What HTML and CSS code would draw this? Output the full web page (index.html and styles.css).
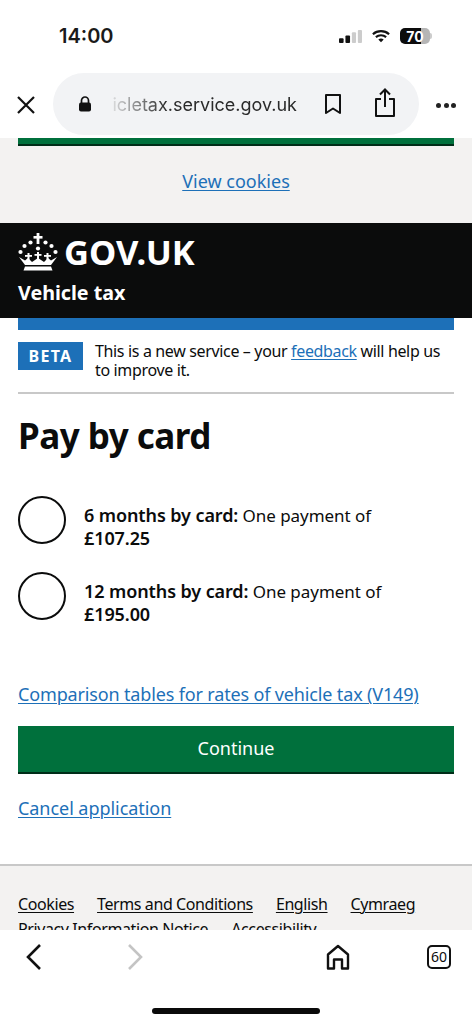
FILE: index.html
```html
<!DOCTYPE html>
<html>
<head>
  <title>Pay by card - Vehicle tax</title>
  <link rel="stylesheet" href="styles.css">
</head>
<body>
  <div class="phone">
    <div class="statusBar">
      <span class="time">14:00</span>
      <div class="statusIcons">
        <svg width="23" height="15" viewBox="0 0 25 16">
          <rect x="0" y="10" width="5" height="5" rx="1" fill="#111"/>
          <rect x="7" y="7" width="5" height="8" rx="1" fill="#111"/>
          <rect x="14" y="3.500" width="4.500" height="11.500" rx="1" fill="#ccc"/>
          <rect x="20.500" y="1" width="4.500" height="14" rx="1" fill="#ccc"/>
        </svg>
        <svg class="wifi" width="18" height="14" viewBox="0 0 20 15">
          <path d="M1 5.500C6 1 14 1 19 5.500M4.300 8.700C7.500 6 12.500 6 15.700 8.700" fill="none" stroke="#111" stroke-width="2.400"/>
          <path d="M7 11.300C8.800 10 11.200 10 13 11.300L10 14.500Z" fill="#111"/>
        </svg>
        <div class="battery"><span class="batteryLevel">70</span></div>
        <span class="batteryTip"></span>
      </div>
    </div>

    <div class="urlRow">
      <svg class="closeIcon" width="20" height="20" viewBox="0 0 20 20">
        <path d="M2 2L18 18M18 2L2 18" stroke="#111" stroke-width="2.200" fill="none"/>
      </svg>
      <div class="urlBar">
        <svg width="14" height="16" viewBox="0 0 14 16">
          <path d="M3.500 7V4.500a3.500 3.500 0 0 1 7 0V7" fill="none" stroke="#111" stroke-width="1.700"/>
          <rect x="1" y="6.500" width="12" height="9" rx="2" fill="#111"/>
        </svg>
        <span class="urlText">icletax.service.gov.uk</span>
        <svg class="bookmark" width="18" height="22" viewBox="0 0 18 22">
          <path d="M2 2H16V20L9 15.500L2 20Z" fill="none" stroke="#111" stroke-width="2" stroke-linejoin="round"/>
        </svg>
        <svg class="share" width="22" height="30" viewBox="0 0 22 30">
          <path d="M7 11H2V28H20V11H15" fill="none" stroke="#111" stroke-width="2" stroke-linejoin="round"/>
          <path d="M11 19V2M6 6.500L11 1.500L16 6.500" fill="none" stroke="#111" stroke-width="2"/>
        </svg>
      </div>
      <div class="moreDots"><i></i><i></i><i></i></div>
    </div>

    <div class="page">
      <div class="cookieArea">
        <div class="greenBar"></div>
        <a class="link viewCookies" href="#">View cookies</a>
      </div>

      <div class="header">
        <div class="logo">
          <svg width="40" height="38" viewBox="0 0 40 38">
            <g fill="#fff">
              <rect x="18.600" y="0" width="2.800" height="11"/>
              <rect x="15.500" y="3" width="9" height="2.600"/>
              <circle cx="12.500" cy="9.500" r="2.100"/>
              <circle cx="27.500" cy="9.500" r="2.100"/>
              <circle cx="6.500" cy="13" r="2.100"/>
              <circle cx="33.500" cy="13" r="2.100"/>
              <circle cx="2.500" cy="19" r="2.100"/>
              <circle cx="37.500" cy="19" r="2.100"/>
              <circle cx="20" cy="15.500" r="2.100"/>
              <rect x="19" y="19" width="2" height="9"/>
              <rect x="16.500" y="21" width="7" height="1.800"/>
              <rect x="9.500" y="20" width="2" height="8"/>
              <rect x="7" y="22" width="7" height="1.800"/>
              <rect x="28.500" y="20" width="2" height="8"/>
              <rect x="26" y="22" width="7" height="1.800"/>
              <path d="M1 24L7 32H33L39 24L33 27.500L30 25L26 29L20 25L14 29L10 25L7 27.500Z"/>
              <path d="M7 33.500H33L34.500 37.500H5.500Z"/>
            </g>
          </svg>
          <span class="logoText">GOV.UK</span>
        </div>
        <div class="serviceName">Vehicle tax</div>
      </div>

      <div class="main">
        <div class="blueBar"></div>
        <div class="phaseBanner">
          <strong class="phaseTag">BETA</strong>
          <span class="phaseText">This is a new service – your <a class="link" href="#">feedback</a> will help us to improve it.</span>
        </div>

        <h1>Pay by card</h1>

        <div class="radioItem">
          <span class="radio"></span>
          <span class="radioLabel"><b>6 months by card:</b> One payment of<br><b>£107.25</b></span>
        </div>
        <div class="radioItem">
          <span class="radio"></span>
          <span class="radioLabel"><b>12 months by card:</b> One payment of<br><b>£195.00</b></span>
        </div>

        <a class="link comparison" href="#">Comparison tables for rates of vehicle tax (V149)</a>
        <button class="continueBtn">Continue</button>
        <a class="link cancel" href="#">Cancel application</a>
      </div>

      <div class="footer">
        <a href="#">Cookies</a>
        <a href="#">Terms and Conditions</a>
        <a href="#">English</a>
        <a href="#">Cymraeg</a>
        <a href="#">Privacy Information Notice</a>
        <a href="#">Accessibility</a>
      </div>
    </div>

    <div class="bottomBar">
      <div class="navIcons">
        <svg width="18" height="28" viewBox="0 0 18 28">
          <path d="M15 2L3 14L15 26" fill="none" stroke="#111" stroke-width="2.600"/>
        </svg>
        <svg class="forward" width="18" height="28" viewBox="0 0 18 28">
          <path d="M3 2L15 14L3 26" fill="none" stroke="#c4c4c4" stroke-width="2.600"/>
        </svg>
        <svg class="home" width="24" height="26" viewBox="0 0 24 26">
          <path d="M2 24.500V10.500L12 2L22 10.500V24.500H16V15.500H8V24.500Z" fill="none" stroke="#111" stroke-width="2.400" stroke-linejoin="round"/>
        </svg>
        <div class="tabCount">60</div>
      </div>
      <div class="homeIndicator"></div>
    </div>
  </div>
</body>
</html>
```

FILE: styles.css
```css
* { box-sizing: border-box; }
body { margin: 0; background: #fff; font-family: "Noto Sans", Arial, sans-serif; color: #0b0c0c; }
.phone { width: 472px; height: 1024px; display: flex; flex-direction: column; overflow: hidden; }

.statusBar { height: 73px; flex: none; display: flex; justify-content: space-between; padding: 21px 40px 0 59px; }
.time { font-family: Inter, sans-serif; font-size: 20px; font-weight: 600; line-height: 30px; color: #1a1a1a; }
.statusIcons { display: flex; align-items: center; height: 30px; }
.wifi { margin-left: 10px; }
.battery { width: 30px; height: 16px; margin-left: 10px; border-radius: 5px; background: linear-gradient(to right, #0c0c0c 70%, #b5b5b5 70%); display: flex; align-items: center; justify-content: center; }
.batteryLevel { font-family: Inter, sans-serif; font-size: 14px; font-weight: 700; color: #fff; }
.batteryTip { width: 2px; height: 6px; background: #ccc; border-radius: 0 2px 2px 0; }

.urlRow { height: 65px; flex: none; display: flex; align-items: flex-start; padding-left: 16px; }
.closeIcon { margin-top: 22px; flex: none; }
.urlBar { width: 366px; height: 62px; margin-left: 17px; padding-left: 25px; background: #f2f3f5; border-radius: 31px; display: flex; align-items: center; flex: none; }
.urlText { width: 186px; margin-left: 19px; font-family: Inter, sans-serif; font-size: 18px; color: #2a2a2a; white-space: nowrap; overflow: hidden; text-align: right; -webkit-mask-image: linear-gradient(to right, rgba(0,0,0,.1), #000 30%); mask-image: linear-gradient(to right, rgba(0,0,0,.1), #000 30%); }
.bookmark { margin-left: 27px; }
.share { margin-left: 32px; margin-top: -3px; }
.moreDots { display: flex; gap: 2.500px; margin: 30px 0 0 17px; }
.moreDots i { width: 5px; height: 5px; border-radius: 50%; background: #222; }

.page { height: 792px; flex: none; overflow: hidden; }
.cookieArea { height: 85px; background: #f3f2f1; padding: 0 18px; text-align: center; }
.greenBar { height: 8px; background: #00703c; border-bottom: 2px solid #002d18; }
.link { color: #1d70b8; text-decoration: underline; text-decoration-thickness: 1px; text-underline-offset: 2px; }
.viewCookies { display: block; margin-top: 21px; font-size: 18px; line-height: 28px; }

.header { height: 95px; background: #0b0c0c; color: #fff; padding: 9px 18px 0; }
.logo { display: flex; align-items: center; height: 40px; }
.logoText { margin-left: 6px; font-size: 34.500px; font-weight: 700; line-height: 38px; }
.serviceName { margin-top: 7px; font-size: 19.700px; font-weight: 700; line-height: 28px; }

.main { height: 548px; background: #fff; padding: 0 18px; border-bottom: 2px solid #c8c8c8; }
.blueBar { height: 12px; background: #1d70b8; }
.phaseBanner { display: flex; height: 64px; padding-top: 12px; border-bottom: 2px solid #c8c8c8; }
.phaseTag { width: 65px; height: 28px; flex: none; background: #1d70b8; color: #fff; font-size: 16px; letter-spacing: 1.300px; line-height: 28px; text-align: center; }
.phaseText { margin-left: 12px; font-size: 16px; line-height: 19px; letter-spacing: -0.350px; }

h1 { margin: 20px 0 38px; font-size: 35px; font-weight: 700; line-height: 44px; letter-spacing: -0.500px; }
.radioItem { display: flex; height: 76px; }
.radio { width: 48px; height: 48px; flex: none; border: 2.500px solid #0b0c0c; border-radius: 50%; background: #fff; }
.radioLabel { margin-left: 18px; padding-top: 7.500px; font-size: 17px; line-height: 23px; letter-spacing: -0.050px; }
.radioLabel b { font-size: 18px; font-weight: 600; letter-spacing: -0.100px; }
.comparison { display: block; margin-top: 33px; font-size: 18px; line-height: 26px; letter-spacing: -0.150px; }
.continueBtn { display: block; width: 100%; height: 48px; margin-top: 19px; padding: 0 0 2px; background: #00703c; color: #fff; border: none; border-bottom: 2px solid #002d18; font-family: inherit; font-size: 18px; }
.cancel { display: block; margin-top: 21px; font-size: 18px; line-height: 26px; letter-spacing: -0.050px; }

.footer { background: #f3f2f1; padding: 26px 18px 0; display: flex; flex-wrap: wrap; column-gap: 23px; row-gap: 1px; height: 64px; }
.footer a { color: #0b0c0c; font-size: 16px; line-height: 24px; letter-spacing: -0.400px; text-decoration: underline; text-decoration-thickness: 1px; text-underline-offset: 2px; }

.bottomBar { flex: 1; background: #fff; position: relative; }
.navIcons { display: flex; align-items: center; padding: 13px 0 0 25px; }
.forward { margin-left: 83px; }
.home { margin-left: 182px; }
.tabCount { width: 24px; height: 24px; margin-left: 77px; border: 2px solid #111; border-radius: 5px; font-size: 14px; line-height: 20px; text-align: center; }
.homeIndicator { position: absolute; left: 152px; top: 78px; width: 168px; height: 6px; border-radius: 3px; background: #0a0a0a; }
```
